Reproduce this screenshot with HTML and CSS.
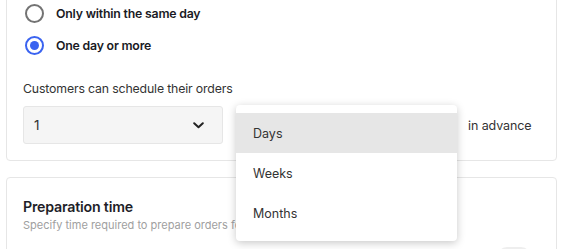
FILE: index.html
```html
<!DOCTYPE html>
<html>
<head>
<meta charset="utf-8">
<link rel="stylesheet" href="styles.css">
</head>
<body>
<div class="page">
  <div class="card card-top">
    <div class="radio-row">
      <span class="radio"></span>
      <span class="radio-label">Only within the same day</span>
    </div>
    <div class="radio-row">
      <span class="radio checked"><span class="dot"></span></span>
      <span class="radio-label">One day or more</span>
    </div>
    <div class="field-label">Customers can schedule their orders</div>
    <div class="field-row">
      <div class="select select-num">
        <span>1</span>
        <svg class="chev" width="11" height="7" viewBox="0 0 11 7"><polyline points="1.2,1.2 5.5,5.2 9.8,1.2" fill="none" stroke="#222" stroke-width="2" stroke-linecap="round" stroke-linejoin="round"/></svg>
      </div>
      <div class="select-wrap">
        <div class="select select-unit">
          <span>Days</span>
        </div>
        <div class="menu">
          <div class="menu-item active">Days</div>
          <div class="menu-item">Weeks</div>
          <div class="menu-item">Months</div>
        </div>
      </div>
      <span class="suffix">in advance</span>
    </div>
  </div>
  <div class="card card-bottom">
    <div class="card-title">Preparation time</div>
    <div class="card-sub">Specify time required to prepare orders for pickup or delivery</div>
    <div class="toggle-row"><span class="toggle"></span></div>
  </div>
</div>
</body>
</html>
```
FILE: styles.css
```css
html, body {
  margin: 0;
  padding: 0;
  background: #ffffff;
  font-family: "Inter", "Noto Sans", sans-serif;
  color: #2a2a2a;
  overflow: hidden;
}
.page {
  padding: 0 6px 0 6px;
  width: 551px;
}
.card {
  border: 1px solid #e6e6e6;
  border-radius: 4px;
  background: #fff;
  padding-left: 16px;
  padding-right: 16px;
}
.card-top {
  margin-top: -12px;
  padding-top: 14px;
  padding-bottom: 16px;
}
.radio-row {
  display: flex;
  align-items: center;
  height: 20px;
  margin-bottom: 12px;
  margin-left: 2px;
}
.radio {
  box-sizing: border-box;
  width: 19px;
  height: 19px;
  border: 2px solid #737373;
  border-radius: 50%;
  display: flex;
  align-items: center;
  justify-content: center;
  margin-right: 12px;
}
.radio.checked {
  border-color: #3a63f0;
}
.dot {
  width: 9px;
  height: 9px;
  border-radius: 50%;
  background: #3a63f0;
}
.radio-label {
  font-size: 12.3px;
  font-weight: 600;
  color: #1a1a24;
  letter-spacing: -0.2px;
}
.field-label {
  margin-top: 25px;
  font-size: 12.3px;
  color: #333;
  line-height: 18px;
  letter-spacing: -0.15px;
}
.field-row {
  display: flex;
  align-items: center;
  margin-top: 8px;
}
.select {
  box-sizing: border-box;
  height: 38px;
  border: 1px solid #e6e6e6;
  border-radius: 3px;
  background: #f5f5f5;
  display: flex;
  align-items: center;
  justify-content: space-between;
  padding: 0 12px 0 10px;
  font-size: 13.5px;
  color: #333;
}
.select-num {
  width: 200px;
}
.chev {
  margin-right: 6px;
}
.select-wrap {
  position: relative;
  margin-left: 13px;
}
.select-unit {
  width: 220px;
}
.menu {
  position: absolute;
  top: -1px;
  left: 0;
  width: 221px;
  padding: 8px 0;
  background: #fff;
  border-radius: 4px;
  box-shadow: 0 2px 9px rgba(0, 0, 0, 0.22);
  z-index: 5;
}
.menu-item {
  height: 40px;
  display: flex;
  align-items: center;
  padding-left: 17px;
  font-size: 12.5px;
  color: #333;
}
.menu-item.active {
  background: #e6e6e6;
}
.suffix {
  margin-left: 12px;
  font-size: 12.5px;
  color: #333;
  letter-spacing: -0.1px;
}
.card-bottom {
  margin-top: 16px;
  padding-top: 19px;
  padding-bottom: 10px;
}
.card-title {
  font-size: 14.2px;
  font-weight: 600;
  color: #1e1e28;
  line-height: 20px;
  letter-spacing: -0.2px;
}
.card-sub {
  font-size: 11px;
  color: #a0a0a0;
  line-height: 15px;
  margin-top: 1px;
  white-space: nowrap;
}
.toggle-row {
  display: flex;
  justify-content: flex-end;
  margin-top: 14px;
  padding-right: 9px;
}
.toggle {
  width: 34px;
  height: 20px;
  border-radius: 10px;
  background: #eeeeee;
}
```
